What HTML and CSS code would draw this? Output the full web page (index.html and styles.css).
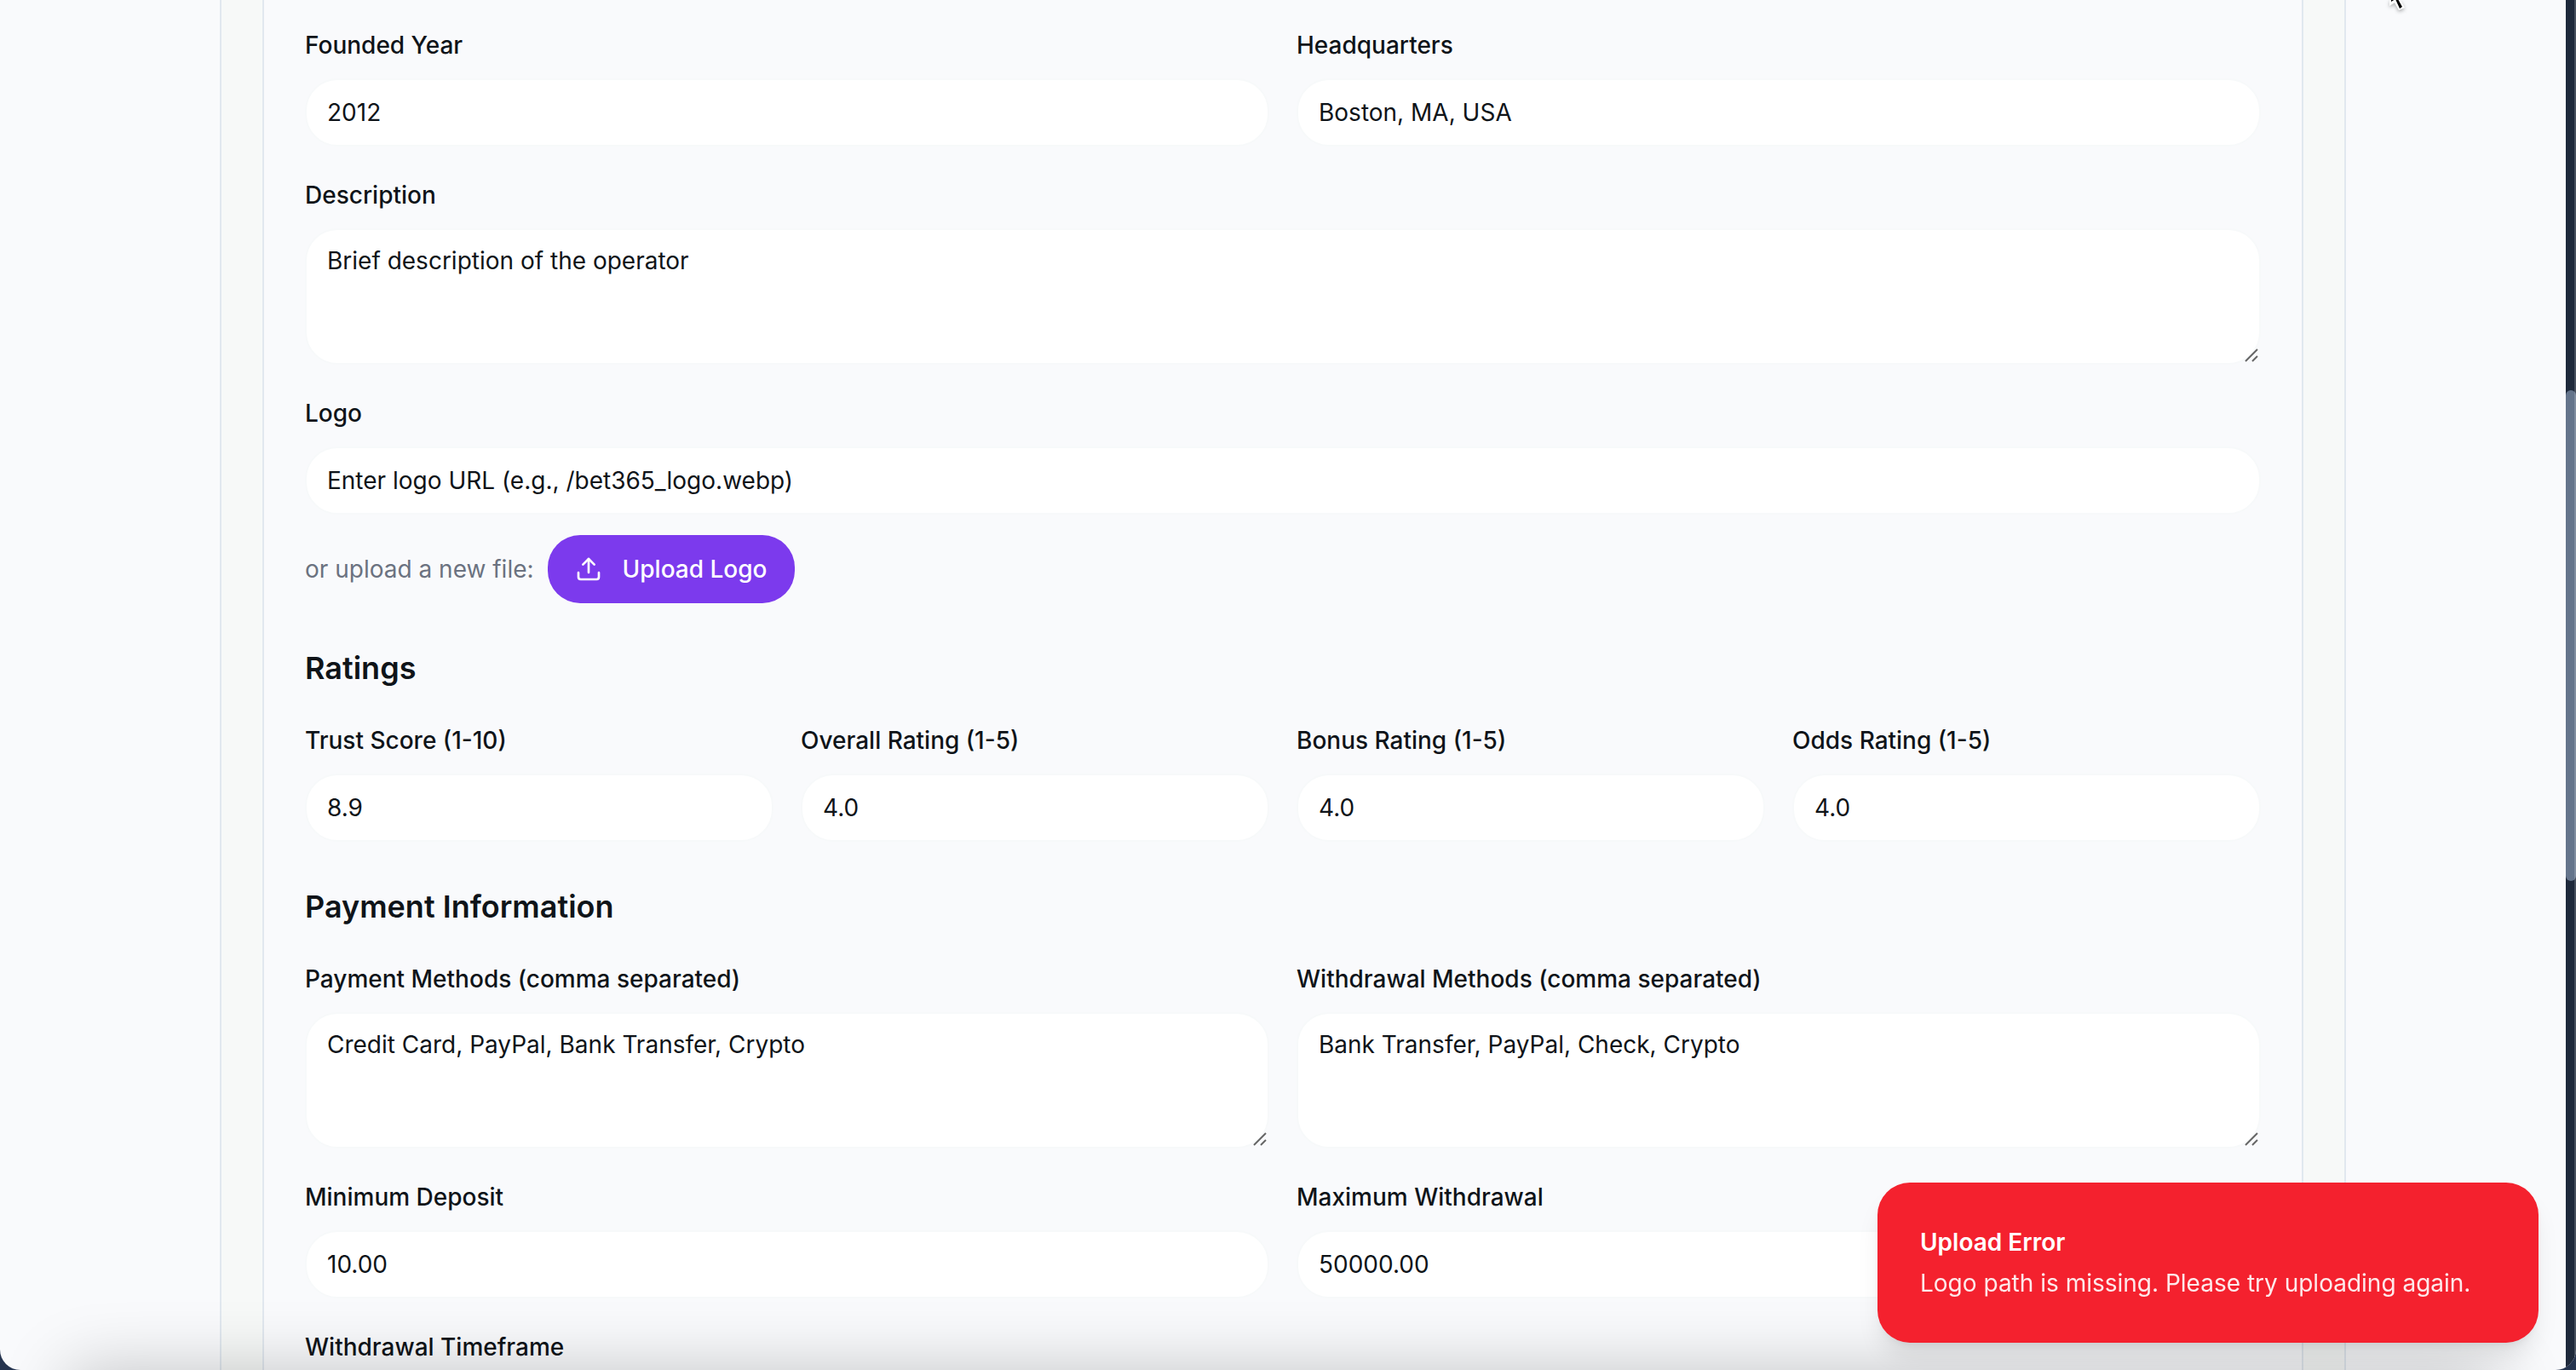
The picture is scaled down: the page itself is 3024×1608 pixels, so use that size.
FILE: index.html
```html
<!DOCTYPE html>
<html lang="en">
<head>
<meta charset="utf-8">
<title>Edit Operator</title>
<link rel="stylesheet" href="styles.css">
</head>
<body>
<div class="window">
  <main class="page">
    <div class="panel">
      <form class="card">
        <div class="group">
          <div class="row cols-2">
            <div class="field"><label for="founded">Founded Year</label><input class="control" id="founded" type="text" value="2012"></div>
            <div class="field"><label for="hq">Headquarters</label><input class="control" id="hq" type="text" value="Boston, MA, USA"></div>
          </div>
          <div class="field"><label for="description">Description</label><textarea class="control" id="description">Brief description of the operator</textarea><svg class="grip" viewBox="0 0 16 16" aria-hidden="true"><path d="M1 15L15 1M9 15L15 9"/></svg></div>
          <div class="field">
            <label for="logo">Logo</label><input class="control" id="logo" type="text" placeholder="Enter logo URL (e.g., /bet365_logo.webp)">
            <div class="upload">
              <span class="hint">or upload a new file:</span>
              <button class="button" type="button">
                <svg class="icon" viewBox="0 0 24 24" fill="none" stroke="currentColor" stroke-width="2" stroke-linecap="round" stroke-linejoin="round" aria-hidden="true"><path d="M3 15v4a2 2 0 0 0 2 2h14a2 2 0 0 0 2-2v-4"/><path d="M17 8l-5-5-5 5"/><path d="M12 3v12"/></svg>
                Upload Logo
              </button>
            </div>
          </div>
        </div>
        <section class="group">
          <h3>Ratings</h3>
          <div class="row cols-4">
            <div class="field"><label for="trust">Trust Score (1-10)</label><input class="control" id="trust" type="text" value="8.9"></div>
            <div class="field"><label for="overall">Overall Rating (1-5)</label><input class="control" id="overall" type="text" value="4.0"></div>
            <div class="field"><label for="bonus">Bonus Rating (1-5)</label><input class="control" id="bonus" type="text" value="4.0"></div>
            <div class="field"><label for="odds">Odds Rating (1-5)</label><input class="control" id="odds" type="text" value="4.0"></div>
          </div>
        </section>
        <section class="group">
          <h3>Payment Information</h3>
          <div class="row cols-2">
            <div class="field"><label for="payment">Payment Methods (comma separated)</label><textarea class="control" id="payment">Credit Card, PayPal, Bank Transfer, Crypto</textarea><svg class="grip" viewBox="0 0 16 16" aria-hidden="true"><path d="M1 15L15 1M9 15L15 9"/></svg></div>
            <div class="field"><label for="withdrawal">Withdrawal Methods (comma separated)</label><textarea class="control" id="withdrawal">Bank Transfer, PayPal, Check, Crypto</textarea><svg class="grip" viewBox="0 0 16 16" aria-hidden="true"><path d="M1 15L15 1M9 15L15 9"/></svg></div>
            <div class="field"><label for="min">Minimum Deposit</label><input class="control" id="min" type="text" value="10.00"></div>
            <div class="field"><label for="max">Maximum Withdrawal</label><input class="control" id="max" type="text" value="50000.00"></div>
          </div>
          <div class="field"><label for="timeframe">Withdrawal Timeframe</label><input class="control" id="timeframe" type="text"></div>
        </section>
      </form>
    </div>
  </main>
  <div class="scrollbar"><div class="thumb"></div></div>
  <div class="bottom-shade"></div>
  <div class="toast" role="alert">
    <strong>Upload Error</strong>
    <p>Logo path is missing. Please try uploading again.</p>
  </div>
  <svg class="cursor" viewBox="0 0 28 16" aria-hidden="true"><path d="M5 -8V7L11 3L16 12L23 9L18 0L26 -2Z" fill="#fff"/><path d="M7 -8V2L12 -1L17 10L20 8L15 -1L22 -8Z" fill="#000"/></svg>
</div>
</body>
</html>
```
FILE: styles.css
```css
* { box-sizing: border-box; }
html, body { height: 100%; }
body {
  margin: 0;
  overflow: hidden;
  background: #25344f;
  color: #0f1419;
  font: 32px/48px Inter, sans-serif;
}
.window {
  position: relative;
  display: flex;
  height: 100%;
  overflow: hidden;
  border-radius: 0 0 24px 24px;
  background: #f9fafc;
}
.page { flex: 1; min-width: 0; overflow: hidden; }
.panel {
  max-width: 2496px;
  margin: 0 auto;
  padding: 0 48px;
  border: solid #e1e8ef;
  border-width: 0 2px;
  background: #f7f9f8;
}
.card {
  display: flex;
  flex-direction: column;
  gap: 48px;
  padding: 28px 48px 48px;
  border: solid #e1e8ef;
  border-width: 0 2px;
  background: #f9fafc;
}
.group { display: flex; flex-direction: column; gap: 32px; }
h3 { margin: 0; font-size: 36px; line-height: 56px; font-weight: 600; }
.row { display: grid; gap: 32px; }
.cols-2 { grid-template-columns: repeat(2, minmax(0, 1fr)); }
.cols-4 { grid-template-columns: repeat(4, minmax(0, 1fr)); }
.field { position: relative; }
label { font-size: 28px; line-height: 28px; font-weight: 500; }
.control {
  display: block;
  width: 100%;
  height: 80px;
  margin: 16px 0 0;
  padding: 16px 24px;
  border: 2px solid #f7f9fa;
  border-radius: 38px;
  outline: 0;
  background: #fff;
  color: inherit;
  font: 28px/40px Inter, sans-serif;
}
.control::placeholder { color: inherit; opacity: 1; }
textarea.control { height: 160px; resize: vertical; }
textarea.control::-webkit-resizer { background: transparent; }
.grip {
  position: absolute;
  right: 3px;
  bottom: 3px;
  width: 16px;
  height: 16px;
  fill: none;
  stroke: #666;
  stroke-width: 2;
  pointer-events: none;
}
.upload { display: flex; align-items: center; gap: 16px; margin-top: 24px; }
.hint { color: #6b7280; font-size: 28px; line-height: 40px; }
.button {
  display: flex;
  align-items: center;
  gap: 24px;
  height: 80px;
  padding: 0 32px;
  border: 0;
  border-radius: 38px;
  background: #7c3aed;
  color: #fff;
  font: 500 28px/40px Inter, sans-serif;
}
.icon { width: 32px; height: 32px; }
.scrollbar {
  position: relative;
  width: 12px;
  padding-top: 458px;
  background: #1e293b;
}
.scrollbar::after {
  content: "";
  position: absolute;
  inset: 0 0 0 auto;
  width: 2px;
  background: rgba(255, 255, 255, .18);
}
.thumb { height: 576px; border-radius: 6px; background: #64748b; }
.toast {
  position: absolute;
  right: 44px;
  bottom: 32px;
  width: 776px;
  padding: 50px;
  border-radius: 38px;
  background: #f4212e;
  box-shadow: 0 20px 30px -6px rgba(0, 0, 0, .1), 0 8px 12px -8px rgba(0, 0, 0, .1);
  color: #fff;
  font-size: 28px;
  line-height: 40px;
}
.toast strong { display: block; font-weight: 600; }
.toast p { margin: 8px 0 0; opacity: .9; }
.bottom-shade {
  position: absolute;
  left: 80px;
  right: 92px;
  bottom: -200px;
  height: 200px;
  box-shadow: 0 0 80px rgba(0, 0, 0, .22);
  pointer-events: none;
}
.cursor {
  position: absolute;
  top: 0;
  right: 196px;
  width: 28px;
  height: 16px;
  filter: drop-shadow(0 2px 2px rgba(0, 0, 0, .3));
}
```
